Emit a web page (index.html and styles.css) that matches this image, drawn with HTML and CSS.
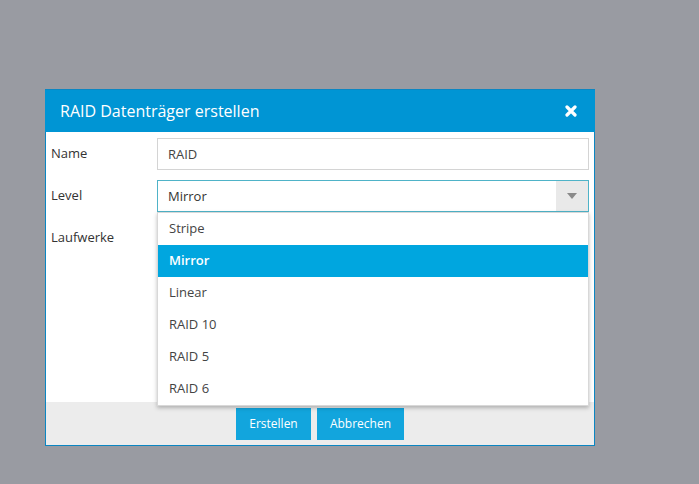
FILE: index.html
```html
<!DOCTYPE html>
<html>
<head>
<meta charset="utf-8">
<link rel="stylesheet" href="styles.css">
</head>
<body>
<div class="dialog">
  <div class="header">
    <span class="title">RAID Datenträger erstellen</span>
    <svg class="close" width="12" height="12" viewBox="0 0 12 12"><path d="M2 2 L10 10 M10 2 L2 10" stroke="#fff" stroke-width="3.2" stroke-linecap="round"/></svg>
  </div>
  <div class="content">
    <div class="row">
      <label class="label">Name</label>
      <div class="input">RAID</div>
    </div>
    <div class="row">
      <label class="label">Level</label>
      <div class="select">
        <span class="value">Mirror</span>
        <span class="arrow"><svg width="10" height="6" viewBox="0 0 10 6"><path d="M0 0 L10 0 L5 6 Z" fill="#8a8a8a"/></svg></span>
        <ul class="menu">
          <li>Stripe</li>
          <li class="active">Mirror</li>
          <li>Linear</li>
          <li>RAID 10</li>
          <li>RAID 5</li>
          <li>RAID 6</li>
        </ul>
      </div>
    </div>
    <div class="row">
      <label class="label">Laufwerke</label>
    </div>
  </div>
  <div class="footer">
    <button class="btn btn-create">Erstellen</button>
    <button class="btn btn-cancel">Abbrechen</button>
  </div>
</div>
</body>
</html>
```
FILE: styles.css
```css
html, body {
  margin: 0;
  padding: 0;
  background: #999ba2;
  width: 699px;
  height: 484px;
  overflow: hidden;
  font-family: "Open Sans", "Noto Sans", sans-serif;
}
.dialog {
  margin: 89px 0 0 45px;
  width: 548px;
  height: 355px;
  border: 1px solid #0b86c2;
  background: #fff;
  display: flex;
  flex-direction: column;
}
.header {
  height: 42px;
  background: #0095d4;
  display: flex;
  align-items: center;
  justify-content: space-between;
  padding: 0 18px 0 15px;
  margin: -1px -1px 0 -1px;
  border-top: 1px solid #0b86c2;
}
.title {
  color: #fff;
  font-size: 16px;
  letter-spacing: 0;
}
.close {
  display: block;
}
.content {
  flex: 1;
  padding: 6px 5px 0 5px;
  display: flex;
  flex-direction: column;
  gap: 10px;
}
.row {
  display: flex;
  align-items: center;
  height: 32px;
}
.label {
  width: 106px;
  font-size: 13px;
  color: #333;
  padding-top: 0;
  margin-top: -2px;
}
.input {
  flex: 1;
  height: 30px;
  border: 1px solid #d4d4d4;
  font-size: 13px;
  color: #444;
  display: flex;
  align-items: center;
  padding-left: 10px;
}
.select {
  flex: 1;
  height: 30px;
  border: 1px solid #4fb3c8;
  position: relative;
  display: flex;
  align-items: center;
  font-size: 13px;
  color: #333;
}
.value {
  flex: 1;
  padding-left: 10px;
}
.arrow {
  width: 32px;
  height: 30px;
  background: #e9e9e9;
  display: flex;
  align-items: center;
  justify-content: center;
}
.arrow svg { display: block; }
.menu {
  position: absolute;
  left: -1px;
  top: 31px;
  width: 430px;
  margin: 0;
  padding: 0;
  list-style: none;
  background: #fff;
  border: 1px solid #d8d8d8;
  box-shadow: 0 2px 4px rgba(0,0,0,0.25);
  z-index: 5;
}
.menu li {
  height: 32px;
  line-height: 31px;
  padding-left: 11px;
  color: #444;
  font-size: 13px;
}
.menu li.active {
  background: #00a6df;
  color: #fff;
  font-weight: 600;
}
.footer {
  height: 43px;
  background: #ececec;
  display: flex;
  align-items: center;
  justify-content: center;
  gap: 6px;
  padding-top: 0;
}
.btn {
  height: 32px;
  border: none;
  background: #12a5dd;
  color: #fff;
  font-family: "Open Sans", "Noto Sans", sans-serif;
  font-size: 12px;
  padding: 0;
}
.btn-create { width: 75px; }
.btn-cancel { width: 87px; }
```
